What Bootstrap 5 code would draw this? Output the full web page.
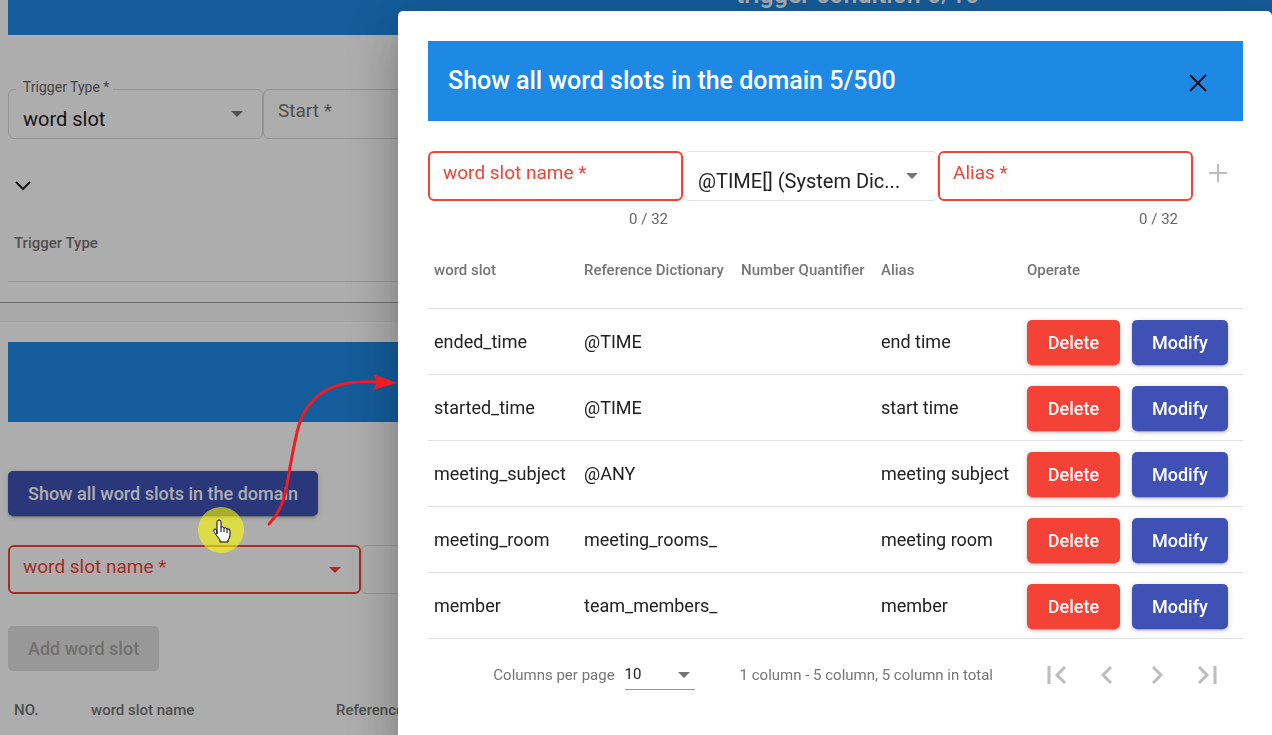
<!DOCTYPE html>
<html lang="en">
<head>
<meta charset="utf-8">
<meta name="viewport" content="width=device-width, initial-scale=1">
<title>Word slots</title>
<link href="https://cdn.jsdelivr.net/npm/bootstrap@5.3.0/dist/css/bootstrap.min.css" rel="stylesheet">
<style>
  :root { --blue: #1e88e5; --red: #f44336; --indigo: #3f51b5; --line: #e0e0e0; --muted: #757575; --ink: #212121; }
  html, body { height: 100%; }
  body { font-family: Roboto, "Liberation Sans", sans-serif; font-size: 18px; line-height: 24px; color: var(--ink); overflow: hidden; background: #fff; }

  /* page behind the dialog */
  .backpage { height: 100vh; overflow: hidden; }
  .title-bar { background: var(--blue); color: #fff; font-size: 25px; font-weight: 500; height: 80px; line-height: 80px; }
  .title-bar h2 { font: inherit; line-height: 82px; margin: 0; padding-left: 20px; }
  .title-bar.scrolled { height: 35px; overflow: hidden; padding-left: 728px; }
  .title-bar.scrolled span { height: 80px; flex-shrink: 0; white-space: nowrap; }
  .trigger-row { margin-top: 54px; }
  .expander { width: 30px !important; margin-top: 22px; }
  .panel-gap { height: 19px; margin: 20px 0 0 -8px; border-top: 1px solid #a0a0a0; background: #f8f8f8; }
  .slot-panel { border-top: 1px solid #f4f4f4; padding-top: 20px; margin-left: -8px; padding-left: 8px; }
  .show-all { margin-top: 49px; }
  .slot-row { margin: 29px 0 32px; }
  .slot-row .field { height: 49px; }

  /* outlined fields */
  .field { position: relative; height: 50px; min-width: 0; }
  .field .form-control, .field .form-select { height: 100%; border: 1px solid var(--line); border-radius: 6px; background: transparent; font-size: 20px; color: var(--ink); padding: 9px 38px 0 14px; box-shadow: none; }
  .field label { position: absolute; left: 15px; top: 10px; color: var(--muted); font-size: 19px; line-height: 24px; white-space: nowrap; pointer-events: none; }
  .field.strong .form-control, .field.strong .form-select { border-color: #dadada; }
  .field.invalid .form-control, .field.invalid .form-select { border: 2px solid var(--red); }
  .field.invalid label { color: var(--red); }
  .field.floated label { top: -14px; left: 8px; padding: 0 4px 0 7px; font-size: 14px; background: #fff; color: #666; }
  .caret { position: absolute; right: 20px; top: 22px; width: 12px; height: 6px; fill: var(--muted); pointer-events: none; }
  .invalid .caret { fill: var(--red); }
  .w-slot { width: 353px; flex-shrink: 0; }
  .w-field { width: 255px; flex-shrink: 0; }
  .counter { font-size: 15px; line-height: 20px; padding-right: 15px; margin-top: 8px; color: #666; }

  .btn-raised { height: 45px; min-width: 93px; padding: 0 20px; border: 0; border-radius: 5px; color: #fff; font-size: 18px; font-weight: 500; box-shadow: 0 4px 1px -3px rgba(0,0,0,.2), 0 2px 3px rgba(0,0,0,.14), 0 1px 6px rgba(0,0,0,.12); }
  .btn-raised.danger { background: var(--red); }
  .btn-raised.main { background: var(--indigo); }
  .btn-raised:disabled { background: #e0e0e0; color: #a6a6a6; box-shadow: none; opacity: 1; }
  .btn-plain { border: 0; background: none; padding: 0; width: 50px; height: 50px; display: inline-flex; align-items: center; justify-content: center; flex-shrink: 0; }

  .grid-table { width: 100%; table-layout: fixed; }
  .grid-table th { font-size: 15px; line-height: 20px; font-weight: 500; color: var(--muted); padding: 0 6px 6px; white-space: nowrap; height: 70px; }
  .grid-table td { padding: 2px 6px 0; height: 66px; white-space: nowrap; }
  .grid-table tr { border-bottom: 1px solid var(--line); }
  .col-no { width: 77px; } .col-name { width: 245px; }
  .col-slot { width: 150px; } .col-dict { width: 157px; } .col-num { width: 140px; } .col-alias { width: 146px; }
  .actions { gap: 12px; }

  /* dialog */
  .scrim { position: fixed; inset: 0; background: rgba(0,0,0,.32); padding: 11px 0 0 398px; }
  .sheet { height: 100vh; background: #fff; border-radius: 5px; padding: 30px 29px 0 30px; box-shadow: 0 14px 19px -9px rgba(0,0,0,.2), 0 30px 48px 4px rgba(0,0,0,.14), 0 11px 58px 10px rgba(0,0,0,.12); }
  .closer { padding-top: 4px; margin-right: 20px; }
  .entry-row { margin-top: 30px; }
  .entry { flex: 1 1 0; min-width: 0; }
  .adder { height: 44px; }
  .slots { margin-top: 9px; }
  .pager { font-size: 15px; line-height: 20px; color: var(--muted); padding: 11px 11px 0 0; }
  .page-size { position: relative; width: 70px; margin: 0 45px 0 10px; }
  .page-size select { width: 100%; height: 30px; border: 0; border-bottom: 1px solid #949494; border-radius: 0; padding: 0; appearance: none; background: none; font-size: 15px; color: var(--ink); }
  .page-size .caret { right: 5px; top: 12px; }
  .range { margin-right: 39px; }

  /* pointer and arrow drawn over the page */
  .pointer { position: absolute; left: 197px; top: 506px; z-index: 5; }
  .guide { position: absolute; left: 260px; top: 370px; z-index: 5; pointer-events: none; }
</style>
</head>
<body>
<main class="backpage ps-2">
  <div class="title-bar scrolled d-flex align-items-end"><span>trigger condition 0/10</span></div>
  <div class="d-flex trigger-row">
    <div class="field floated strong w-field">
      <select class="form-select" id="triggerType"><option>word slot</option></select>
      <label for="triggerType">Trigger Type *</label>
      <svg class="caret" viewBox="0 0 12 6"><path d="M0 0h12L6 6z"/></svg>
    </div>
    <div class="field strong w-field">
      <input class="form-control" id="start" type="text">
      <label for="start">Start *</label>
    </div>
  </div>
  <button class="btn-plain d-flex expander" aria-label="Expand">
    <svg width="18" height="12" viewBox="0 0 18 12" fill="none" stroke="#212121" stroke-width="2"><path d="M2 2l7 7 7-7"/></svg>
  </button>
  <table class="grid-table">
    <thead><tr><th>Trigger Type</th></tr></thead>
  </table>
  <div class="panel-gap"></div>
  <section class="slot-panel">
    <div class="title-bar"></div>
    <button class="btn btn-raised main d-block show-all">Show all word slots in the domain</button>
    <div class="d-flex slot-row">
      <div class="field invalid w-slot">
        <select class="form-select" id="slotPick"><option></option></select>
        <label for="slotPick">word slot name *</label>
        <svg class="caret" viewBox="0 0 12 6"><path d="M0 0h12L6 6z"/></svg>
      </div>
      <div class="field w-field"><input class="form-control" type="text" disabled aria-label="Dictionary"></div>
    </div>
    <button class="btn btn-raised d-block" disabled>Add word slot</button>
    <table class="grid-table mt-2">
      <colgroup><col class="col-no"><col class="col-name"><col></colgroup>
      <thead><tr><th>NO.</th><th>word slot name</th><th>Reference</th></tr></thead>
    </table>
  </section>
</main>

<div class="scrim">
  <div class="sheet" role="dialog" aria-labelledby="sheetTitle">
    <div class="title-bar d-flex align-items-center justify-content-between">
      <h2 id="sheetTitle">Show all word slots in the domain 5/500</h2>
      <button class="btn-plain closer" aria-label="Close">
        <svg width="20" height="20" viewBox="0 0 20 20" fill="none" stroke="#111" stroke-width="2"><path d="M2 2l16 16M18 2L2 18"/></svg>
      </button>
    </div>
    <form class="d-flex entry-row">
      <div class="entry">
        <div class="field invalid"><input class="form-control" id="slotName" type="text"><label for="slotName">word slot name *</label></div>
        <div class="counter text-end">0 / 32</div>
      </div>
      <div class="entry">
        <div class="field">
          <select class="form-select" aria-label="Dictionary"><option>@TIME[] (System Dic...</option></select>
          <svg class="caret" viewBox="0 0 12 6"><path d="M0 0h12L6 6z"/></svg>
        </div>
      </div>
      <div class="entry">
        <div class="field invalid"><input class="form-control" id="alias" type="text"><label for="alias">Alias *</label></div>
        <div class="counter text-end">0 / 32</div>
      </div>
      <button class="btn-plain adder" type="button" disabled aria-label="Add">
        <svg width="18" height="18" viewBox="0 0 18 18" fill="none" stroke="#bdbdbd" stroke-width="2"><path d="M9 0v18M0 9h18"/></svg>
      </button>
    </form>
    <table class="grid-table slots">
      <colgroup><col class="col-slot"><col class="col-dict"><col class="col-num"><col class="col-alias"><col></colgroup>
      <thead><tr><th>word slot</th><th>Reference Dictionary</th><th>Number Quantifier</th><th>Alias</th><th>Operate</th></tr></thead>
      <tbody>
        <tr><td>ended_time</td><td>@TIME</td><td></td><td>end time</td><td><div class="d-flex actions"><button class="btn btn-raised danger">Delete</button><button class="btn btn-raised main">Modify</button></div></td></tr>
        <tr><td>started_time</td><td>@TIME</td><td></td><td>start time</td><td><div class="d-flex actions"><button class="btn btn-raised danger">Delete</button><button class="btn btn-raised main">Modify</button></div></td></tr>
        <tr><td>meeting_subject</td><td>@ANY</td><td></td><td>meeting subject</td><td><div class="d-flex actions"><button class="btn btn-raised danger">Delete</button><button class="btn btn-raised main">Modify</button></div></td></tr>
        <tr><td>meeting_room</td><td>meeting_rooms_</td><td></td><td>meeting room</td><td><div class="d-flex actions"><button class="btn btn-raised danger">Delete</button><button class="btn btn-raised main">Modify</button></div></td></tr>
        <tr><td>member</td><td>team_members_</td><td></td><td>member</td><td><div class="d-flex actions"><button class="btn btn-raised danger">Delete</button><button class="btn btn-raised main">Modify</button></div></td></tr>
      </tbody>
    </table>
    <div class="pager d-flex align-items-center justify-content-end">
      <label for="pageSize">Columns per page</label>
      <div class="page-size">
        <select id="pageSize"><option>10</option></select>
        <svg class="caret" viewBox="0 0 12 6"><path d="M0 0h12L6 6z"/></svg>
      </div>
      <span class="range">1 column - 5 column, 5 column in total</span>
      <button class="btn-plain" disabled aria-label="First page"><svg width="20" height="18" viewBox="0 0 20 18" fill="none" stroke="#bdbdbd" stroke-width="3"><path d="M2 0v18M18 1l-8 8 8 8"/></svg></button>
      <button class="btn-plain" disabled aria-label="Previous page"><svg width="12" height="18" viewBox="0 0 12 18" fill="none" stroke="#bdbdbd" stroke-width="3"><path d="M10 1L2 9l8 8"/></svg></button>
      <button class="btn-plain" disabled aria-label="Next page"><svg width="12" height="18" viewBox="0 0 12 18" fill="none" stroke="#bdbdbd" stroke-width="3"><path d="M2 1l8 8-8 8"/></svg></button>
      <button class="btn-plain" disabled aria-label="Last page"><svg width="20" height="18" viewBox="0 0 20 18" fill="none" stroke="#bdbdbd" stroke-width="3"><path d="M2 1l8 8-8 8M18 0v18"/></svg></button>
    </div>
  </div>
</div>

<svg class="guide" width="140" height="160" viewBox="260 370 140 160">
  <path d="M269 524C287 505 286 485 291 462C297 432 298 412 319 395C336 382 357 381 378 382" fill="none" stroke="#ed1c24" stroke-width="3" stroke-linecap="round"/>
  <path d="M373 374l24 9-24 7 4-8z" fill="#ed1c24"/>
</svg>
<svg class="pointer" width="48" height="48" viewBox="0 0 48 48">
  <circle cx="24" cy="24" r="23" fill="#ff0" fill-opacity=".58"/>
  <path d="M20 28V16q0-2 2-2t2 2v5q2-1 3 1 2-1 3 1 3-1 3 2v4q0 3-2 5v2h-8v-2l-6-8q-1-3 1-3 1 0 2 2z" fill="#fff" stroke="#000" stroke-width="1"/>
  <path d="M24 21v5M27 22v4M30 23v4" stroke="#000" stroke-width="1"/>
</svg>
</body>
</html>
